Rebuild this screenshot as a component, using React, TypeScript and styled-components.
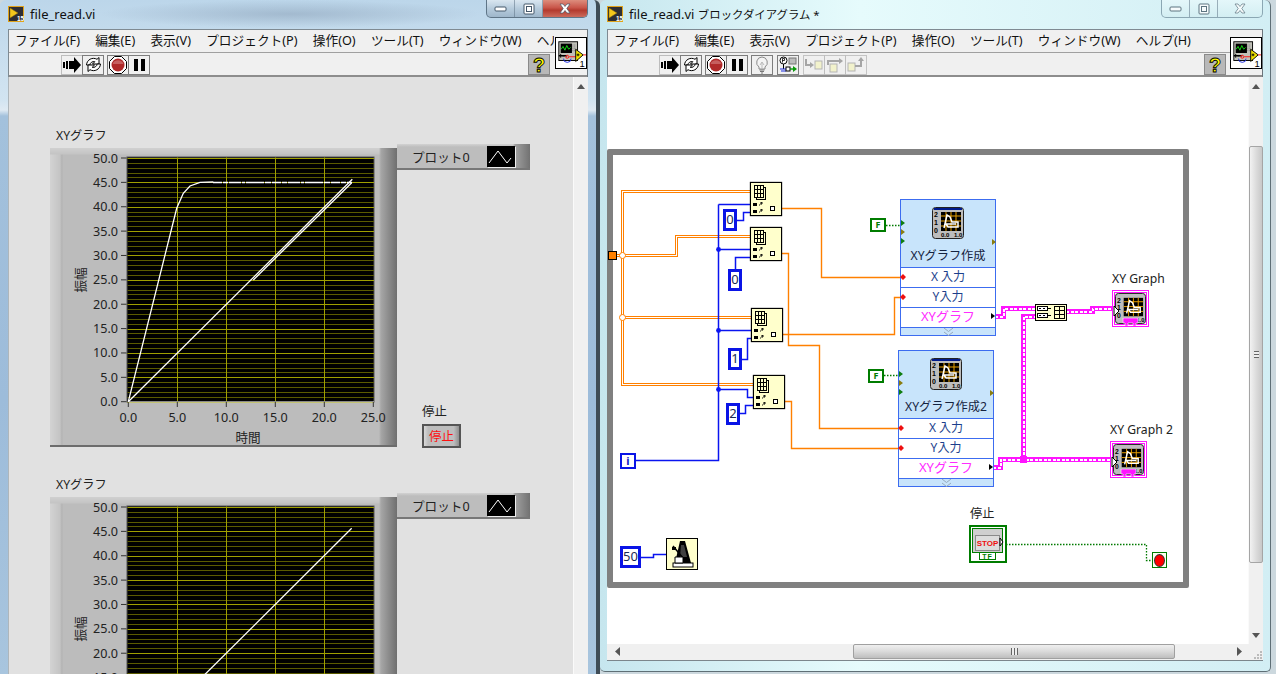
import React from "react";
import styled, { createGlobalStyle, css } from "styled-components";

const UI_FONT = `"Noto Sans", "Noto Sans CJK JP", sans-serif`;
const GLYPH_FONT = "Liberation Sans, sans-serif";

const GlobalStyle = createGlobalStyle`
  html, body {
    margin: 0;
    padding: 0;
    width: 1276px;
    height: 674px;
    overflow: hidden;
    background: #ccd8de;
    font-family: ${UI_FONT};
    font-size: 12px;
    color: #1a1a1a;
  }
`;

const Desktop = styled.div`
  display: flex;
  width: 1276px;
  height: 674px;
  overflow: hidden;
`;

/* window chrome */
const BackWindow = styled.section`
  flex: none;
  display: flex;
  flex-direction: column;
  width: 600px;
  height: 674px;
  padding: 0 8px;
  box-sizing: border-box;
  border-right: 4px solid #3f4c56;
  border-radius: 6px 6px 0 0;
  overflow: hidden;
  background:
    radial-gradient(ellipse 190px 14px at 290px 14px, rgba(110, 130, 155, 0.35), transparent),
    linear-gradient(180deg, #bcd6ea 0, #d2e4f1 100px, #dfeaf3 110px, #a3c1dc 116px, #9dbcda 400px, #a8c5de 674px);
`;

const FrontWindow = styled.section`
  flex: none;
  display: flex;
  flex-direction: column;
  width: 671px;
  height: 672px;
  padding: 0 7px 10px;
  box-sizing: border-box;
  border-right: 1px solid #5f6f76;
  border-bottom: 1px solid #5f6f76;
  border-radius: 6px 6px 5px 5px;
  overflow: hidden;
  background: linear-gradient(90deg, #c6e6ee 0, #e6fbfc 260px, #d2eef4 670px);
`;

const TitleBar = styled.header`
  flex: none;
  display: flex;
  align-items: flex-start;
  height: 29px;
  margin: 0 -1px;
`;

const TitleIcon = styled.svg`
  flex: none;
  margin: 6px 6px 0 1px;
`;

const TitleText = styled.span`
  flex: 1;
  margin-top: 6px;
  font-size: 13px;
  line-height: 16px;
  white-space: nowrap;
  color: #111;
`;

const TitleKana = styled.span`
  font-size: 11.4px;
`;

const WindowControls = styled.div<{ $active?: boolean }>`
  flex: none;
  display: flex;
  width: 102px;
  height: 18px;
  margin-right: 1px;
  border: 1px solid ${(p) => (p.$active ? "#5f7587" : "#8ba7b3")};
  border-top: none;
  border-radius: 0 0 5px 5px;
  box-sizing: border-box;
  overflow: hidden;
  background: ${(p) =>
    p.$active
      ? "linear-gradient(180deg, #d9e6f0, #b6cbdc 50%, #9fb7cb)"
      : "linear-gradient(180deg, #e4f7fa, #d3eef2)"};
`;

const ControlButton = styled.div<{ $grow?: boolean; $danger?: boolean }>`
  display: flex;
  align-items: center;
  justify-content: center;
  flex: ${(p) => (p.$grow ? "1" : "none")};
  width: ${(p) => (p.$grow ? "auto" : "27px")};
  border-right: ${(p) => (p.$grow ? "none" : "1px solid rgba(95, 117, 135, 0.55)")};
  background: ${(p) =>
    p.$danger ? "linear-gradient(180deg, #dd8d7d, #c9564a 45%, #b33a2e 60%, #cc6b5c)" : "none"};
`;

const Chrome = styled.div`
  position: relative;
  flex: none;
  border-top: 1px solid #7f8a92;
  border-left: 1px solid #7f8a92;
  border-right: 1px solid #6b757c;
  background: #f0f0f0;
`;

const MenuBar = styled.nav`
  display: flex;
  gap: 15.2px;
  height: 22px;
  margin-right: 33px;
  padding: 0 0 3px 6px;
  box-sizing: border-box;
  overflow: hidden;
  align-items: center;
  white-space: nowrap;
  font-size: 12.7px;
  color: #111;
`;

const MenuItem = styled.span`
  flex: none;
`;

const ToolBar = styled.div`
  display: flex;
  align-items: center;
  height: 25px;
  padding-top: 1px;
  box-sizing: border-box;
  border-top: 1px solid #a0a0a0;
  border-bottom: 2px solid #8d8d8d;
`;

const ToolGroup = styled.div<{ $gap?: number }>`
  display: flex;
  flex: none;
  margin-left: ${(p) => p.$gap ?? 4}px;
`;

const ToolButton = styled.div<{ $dark?: boolean; $faint?: boolean }>`
  display: flex;
  align-items: center;
  justify-content: center;
  width: 22px;
  height: 20px;
  box-sizing: border-box;
  border: 1px solid ${(p) => (p.$dark ? "#7d7d7d" : "#bdbdbd")};
  margin-left: -1px;
  background: #f0f0f0;
  opacity: ${(p) => (p.$faint ? 0.85 : 1)};
`;

const HelpButton = styled.div<{ $reserve: number }>`
  display: flex;
  align-items: center;
  justify-content: center;
  flex: none;
  width: 22px;
  height: 21px;
  margin-left: auto;
  margin-right: ${(p) => p.$reserve}px;
  box-sizing: border-box;
  border: 1px solid #8a8a8a;
  background: #b8b8b8;
`;

const ConnectorPane = styled.svg`
  position: absolute;
  right: 0;
  top: 7px;
  box-sizing: border-box;
  background: #fff;
  border: 1px solid #000;
`;

const PaneBody = styled.div`
  flex: 1;
  display: flex;
  min-height: 0;
  overflow: hidden;
`;

/* front panel */
const FrontPanel = styled.main`
  flex: 1;
  min-width: 0;
  padding: 49px 0 0 41px;
  box-sizing: border-box;
  overflow: hidden;
  background: #e1e1e1;
  border-left: 1px solid #aeb6bb;
`;

const GraphBlock = styled.article`
  margin-bottom: 27px;
`;

const GraphLabel = styled.div`
  height: 18px;
  padding: 1px 0 0 6px;
  box-sizing: border-box;
  font-size: 12.2px;
  line-height: 18px;
  color: #222;
`;

const GraphRow = styled.div`
  display: flex;
`;

const GraphCase = styled.div`
  position: relative;
  flex: none;
  width: 347px;
  height: 299px;
  margin-top: 4px;
  box-sizing: border-box;
  border-bottom: 2px solid #6c6c6c;
  background:
    linear-gradient(90deg, transparent 329px, #a6a6a6 331px, #6f6f6f 347px),
    linear-gradient(180deg, #d0d0d0 0, #c4c4c4 6px, transparent 7px),
    linear-gradient(90deg, #d3d3d3 0, #c4c4c4 10px, #b2b2b2 12px, #bcbcbc 13px);
  background-color: #bcbcbc;
`;

const GraphSvg = styled.svg`
  display: block;
  font-family: ${UI_FONT};
  font-size: 12.6px;
`;

const SideColumn = styled.div`
  display: flex;
  flex-direction: column;
`;

const Legend = styled.div`
  display: flex;
  align-items: center;
  width: 133px;
  height: 26px;
  box-sizing: border-box;
  padding-left: 15px;
  border-bottom: 2px solid #777;
  background:
    linear-gradient(90deg, transparent 116px, #a0a0a0 118px, #727272 133px),
    linear-gradient(180deg, #d2d2d2 0, #bdbdbd 3px),
    #bdbdbd;
  font-size: 12.6px;
  color: #222;
`;

const LegendName = styled.span`
  width: 75px;
`;

const LegendSwatch = styled.svg`
  flex: none;
  background: #000;
  box-shadow: 1px 1px 0 #eee;
`;

const StopGroup = styled.div`
  margin: 232px 0 0 25px;
`;

const StopLabel = styled.div`
  height: 22px;
  font-size: 12.4px;
  line-height: 20px;
  color: #222;
`;

const StopButton = styled.div`
  display: flex;
  align-items: center;
  justify-content: center;
  width: 39px;
  height: 24px;
  box-sizing: border-box;
  border: 2px solid #555;
  background: linear-gradient(90deg, #d8d8d8, #bdbdbd 12%, #bdbdbd 85%, #8f8f8f);
  color: #ff1010;
  font-size: 12.4px;
`;

/* scroll bars */
const VScroll = styled.aside`
  flex: none;
  position: relative;
  width: 15px;
  background: #f0f0f0;
  border-left: 1px solid #fafafa;
  box-sizing: border-box;
`;

const ScrollArrow = styled.svg<{ $top?: number; $bottom?: number }>`
  position: absolute;
  left: 3px;
  ${(p) => (p.$top !== undefined ? `top: ${p.$top}px;` : "")}
  ${(p) => (p.$bottom !== undefined ? `bottom: ${p.$bottom}px;` : "")}
`;

const VThumb = styled.div`
  position: absolute;
  left: 0;
  right: 0;
  top: 69px;
  height: 417px;
  box-sizing: border-box;
  border: 1px solid #a5a5a5;
  border-radius: 2px;
  background: linear-gradient(90deg, #f2f2f2, #dcdcdc 50%, #c8c8c8);
`;

const VGrip = styled.div`
  position: absolute;
  top: 50%;
  left: 4px;
  width: 5px;
  height: 7px;
  margin-top: -4px;
  background: repeating-linear-gradient(180deg, #666 0 1px, #eee 1px 3px);
`;

const HScrollRow = styled.div`
  flex: none;
  position: relative;
  height: 16px;
  background: #f0f0f0;
  border-bottom: 1px solid #7c868c;
`;

const HThumb = styled.div`
  position: absolute;
  left: 246px;
  top: 0;
  width: 322px;
  height: 15px;
  box-sizing: border-box;
  border: 1px solid #a0a0a0;
  border-radius: 2px;
  background: linear-gradient(180deg, #efefef, #dadada 50%, #bebebe);
`;

const HGrip = styled.div`
  position: absolute;
  left: 50%;
  top: 3px;
  width: 7px;
  height: 7px;
  margin-left: -3px;
  background: repeating-linear-gradient(90deg, #666 0 1px, #eee 1px 3px);
`;

const HArrow = styled.svg<{ $left: number }>`
  position: absolute;
  left: ${(p) => p.$left}px;
  top: 3px;
`;

const SizeGrip = styled.svg`
  position: absolute;
  right: 0;
  bottom: 0;
`;

/* block diagram: page coordinates are kept so nodes read like the wiring */
const OX = 607;
const OY = 77;

const Canvas = styled.div`
  position: relative;
  flex: 1;
  min-width: 0;
  overflow: hidden;
  background: #fff;
`;

const placed = css<{ $x: number; $y: number }>`
  position: absolute;
  left: ${(p) => p.$x - OX}px;
  top: ${(p) => p.$y - OY}px;
`;

const LoopFrame = styled.div`
  position: absolute;
  left: 0;
  top: 72px;
  width: 582px;
  height: 439px;
  box-sizing: border-box;
  border: 6px solid #808080;
  border-radius: 2px;
`;

const WireLayer = styled.svg`
  position: absolute;
  left: 0;
  top: 0;
`;

const Wire = styled.path`
  fill: none;
`;

const ThickOrange = styled(Wire)`
  stroke: #ff8000;
  stroke-width: 3;
  shape-rendering: crispEdges;
`;

const ThickCore = styled(Wire)`
  stroke: #fff;
  stroke-width: 1;
  shape-rendering: crispEdges;
`;

const ThinOrange = styled(Wire)`
  stroke: #ff8000;
  stroke-width: 1.4;
`;

const BlueWire = styled(Wire)`
  stroke: #0a14f0;
  stroke-width: 1.5;
`;

const GreenWire = styled(Wire)`
  stroke: #007a00;
  stroke-width: 1.3;
  stroke-dasharray: 1.5 1.5;
`;

const PinkWire = styled(Wire)`
  stroke: #ff14ff;
  stroke-width: 5;
  shape-rendering: crispEdges;
`;

const PinkCore = styled(Wire)`
  stroke: #fff;
  stroke-width: 2;
  stroke-dasharray: 3 1.5;
  shape-rendering: crispEdges;
`;

const IndexNode = styled.div<{ $x: number; $y: number }>`
  ${placed}
  width: 32px;
  height: 34px;
  box-sizing: border-box;
  border: 1px solid #000;
  box-shadow: 0 0 1px #000;
  background: #ffffcc;
`;

const NodeArt = styled.svg`
  display: block;
`;

const NumConst = styled.div<{ $x: number; $y: number; $w: number }>`
  ${placed}
  width: ${(p) => p.$w}px;
  height: 22px;
  box-sizing: border-box;
  border: 3px solid #0a14e6;
  background: #fff;
  text-align: center;
  font-size: 13px;
  line-height: 15px;
  color: #1a2a55;
`;

const IndexTerminal = styled.div<{ $x: number; $y: number }>`
  ${placed}
  width: 16px;
  height: 16px;
  box-sizing: border-box;
  border: 2.5px solid #0a14e6;
  background: #fff;
  text-align: center;
  font-size: 11px;
  font-weight: 700;
  line-height: 11px;
  color: #0a14c8;
`;

const BoolConst = styled.div<{ $x: number; $y: number }>`
  ${placed}
  width: 16px;
  height: 14px;
  box-sizing: border-box;
  border: 2.5px solid #007c00;
  background: #fff;
  text-align: center;
  font-size: 9px;
  font-weight: 700;
  line-height: 9px;
  color: #007c00;
`;

const Tunnel = styled.div`
  position: absolute;
  left: 1px;
  top: 174px;
  width: 9px;
  height: 9px;
  box-sizing: border-box;
  border: 1px solid #000;
  background: #ff8000;
`;

const ExpressNode = styled.div<{ $x: number; $y: number }>`
  ${placed}
  width: 96px;
  height: 137px;
  display: flex;
  flex-direction: column;
  box-sizing: border-box;
  border: 1px solid #3c6cf0;
  background: #c8e4fb;
`;

const ExpressHeader = styled.div`
  flex: none;
  display: flex;
  flex-direction: column;
  align-items: center;
  height: 67px;
  padding-top: 7px;
  box-sizing: border-box;
`;

const ExpressTitle = styled.div`
  margin-top: 8px;
  font-size: 12.2px;
  line-height: 17px;
  white-space: nowrap;
  color: #15233f;
`;

const ExpressRow = styled.div<{ $pink?: boolean }>`
  flex: none;
  height: 20px;
  box-sizing: border-box;
  border-top: 1px solid #3c6cf0;
  background: #fff;
  text-align: center;
  font-size: ${(p) => (p.$pink ? 13 : 12)}px;
  line-height: 17px;
  color: ${(p) => (p.$pink ? "#ff2cff" : "#1c3f8c")};
`;

const ExpressFooter = styled.div`
  flex: 1;
  display: flex;
  justify-content: center;
  align-items: center;
  border-top: 1px solid #3c6cf0;
`;

const ExpressTerms = styled.svg`
  position: absolute;
  left: -1px;
  top: -1px;
  pointer-events: none;
`;

const BundleNode = styled.div<{ $x: number; $y: number }>`
  ${placed}
  width: 32px;
  height: 17px;
  box-sizing: border-box;
  border: 1px solid #000;
  background: #ffffcc;
`;

const GraphTerminal = styled.div<{ $x: number; $y: number }>`
  ${placed}
  width: 37px;
  height: 37px;
  box-sizing: border-box;
  border: 1px solid #ff14ff;
  padding: 1px;
  background: #fff;
`;

const GraphFrame = styled.div`
  position: relative;
  width: 33px;
  height: 33px;
  box-sizing: border-box;
  border: 1px solid #ff14ff;
`;

const GraphPin = styled.svg`
  position: absolute;
  left: -2px;
  top: 12px;
`;

const GraphTag = styled.svg`
  position: absolute;
  left: 7px;
  bottom: -2px;
`;

const DiagramLabel = styled.div<{ $x: number; $y: number }>`
  ${placed}
  font-size: 12.2px;
  line-height: 16px;
  white-space: nowrap;
  color: #222;
`;

const WaitNode = styled.div<{ $x: number; $y: number }>`
  ${placed}
  width: 32px;
  height: 32px;
  box-sizing: border-box;
  border: 1px solid #000;
  background: #ffffcc;
`;

const StopTerminal = styled.div<{ $x: number; $y: number }>`
  ${placed}
  width: 38px;
  height: 38px;
  box-sizing: border-box;
  border: 2.5px solid #007c00;
  background: #fff;
`;

const StopCondition = styled.div<{ $x: number; $y: number }>`
  ${placed}
  display: flex;
  align-items: center;
  justify-content: center;
  width: 15px;
  height: 16px;
  box-sizing: border-box;
  border: 1px solid #007c00;
  background: #fffff0;
`;

const StopDot = styled.div`
  width: 9px;
  height: 11px;
  border-radius: 50%;
  background: #f00;
  box-shadow: 0 0 0 1px #333;
`;

/* chart */
const PX0 = 78.3;
const PY0 = 253.7;
const SX = 9.8;
const SY = 4.874;
const xOf = (v: number) => PX0 + v * SX;
const yOf = (v: number) => PY0 - v * SY;

const RISE_TRACE = "M78.3 253.7 L126.700 60.300 L133.300 45.300 L140 38 L150 34.300 L163.300 34";
const RAMP_OUT = "M78.3 253.7 L302.300 31.300";
const RAMP_BACK = "M203.300 132 L301.700 34.700";
const PLATEAU_TRACE = "M163 34.500 L302 34.500";
const RAMP_ONLY = "M78.3 253.700 L301.700 31.300";

function XYChart({ traces, noisy }: { traces: string[]; noisy?: boolean }) {
  const minorY = Array.from({ length: 50 }, (_, i) => i + 1).filter((i) => i % 5 !== 0);
  const majorY = Array.from({ length: 11 }, (_, i) => i * 5);
  const majorX = Array.from({ length: 6 }, (_, i) => i * 5);
  return (
    <GraphSvg width={347} height={297} viewBox="0 0 347 297">
      <rect x={77} y={9} width={247} height={245} fill="#000" stroke="#555" />
      {minorY.map((v) => (
        <line key={v} x1={77.5} x2={324} y1={Math.round(yOf(v)) + 0.5} y2={Math.round(yOf(v)) + 0.5} stroke="#5a5a00" />
      ))}
      {majorY.map((v) => (
        <line key={v} x1={77.5} x2={324} y1={Math.round(yOf(v)) + 0.5} y2={Math.round(yOf(v)) + 0.5} stroke="#a0a000" />
      ))}
      {majorX.slice(1, 5).map((v) => (
        <line key={v} y1={9.5} y2={253} x1={Math.round(xOf(v)) + 0.5} x2={Math.round(xOf(v)) + 0.5} stroke="#a0a000" />
      ))}
      <line x1={78} x2={324} y1={254} y2={254} stroke="#e8e8e8" />
      {majorY.map((v) => (
        <g key={v}>
          <text x={68} y={yOf(v) + 4.5} textAnchor="end" fill="#222">
            {v.toFixed(1)}
          </text>
          <line x1={71} x2={76.5} y1={yOf(v)} y2={yOf(v)} stroke="#333" />
        </g>
      ))}
      {majorX.map((v) => (
        <g key={v}>
          <text x={xOf(v)} y={274} textAnchor="middle" fill="#222">
            {v.toFixed(1)}
          </text>
          <line x1={xOf(v)} x2={xOf(v)} y1={254} y2={259} stroke="#333" />
        </g>
      ))}
      <text x={198} y={294} textAnchor="middle" fill="#222">
        時間
      </text>
      <text transform="rotate(-90 31 132)" x={31} y={136} textAnchor="middle" fill="#222">
        振幅
      </text>
      {traces.map((d) => (
        <path key={d} d={d} fill="none" stroke="#fff" strokeWidth={1.3} />
      ))}
      {noisy && (
        <path
          d={PLATEAU_TRACE}
          fill="none"
          stroke="#fff"
          strokeWidth={1.7}
          strokeDasharray="9 1 5 1 12 1 3 1 18 1 6 1"
        />
      )}
    </GraphSvg>
  );
}

/* toolbar icons */
function RunIcon() {
  return (
    <svg width={18} height={16} viewBox="0 0 18 16">
      <path d="M0 5h2v6H0zM3 4h2v8H3z" fill="#000" />
      <path d="M6 4h5V0l7 8-7 8v-4H6z" fill="#000" />
    </svg>
  );
}

function CycleIcon() {
  const half = "M1.500 9A7 7 0 0 1 12 3.300L14 1.500V8H7.500L9.800 5.700A4 4 0 0 0 4.800 9Z";
  return (
    <svg width={17} height={17} viewBox="0 0 17 17">
      <path d={half} fill="#fff" stroke="#000" />
      <path d={half} fill="#fff" stroke="#000" transform="rotate(180 8.500 8.500)" />
    </svg>
  );
}

function AbortIcon() {
  return (
    <svg width={18} height={18} viewBox="0 0 18 18">
      <path d="M5.500 .5h7l5 5v7l-5 5h-7l-5-5v-7z" fill="#fff" stroke="#000" />
      <circle cx={9} cy={9} r={6.500} fill="#b02a2a" />
      <path d="M3.600 8a5.600 5 0 0 1 10.800 0z" fill="#d98a8a" opacity={0.55} />
    </svg>
  );
}

function PauseIcon() {
  return (
    <svg width={13} height={14} viewBox="0 0 13 14">
      <path d="M1 1h4v12H1zM8 1h4v12H8z" fill="#000" />
    </svg>
  );
}

function BulbIcon() {
  return (
    <svg width={14} height={18} viewBox="0 0 14 18">
      <path d="M7 1a5.500 5.500 0 0 0-3 10v2h6v-2A5.500 5.500 0 0 0 7 1z" fill="#f4f4f4" stroke="#8b8b8b" />
      <path d="M5 9l2-3 2 3M7 6v7" fill="none" stroke="#bbb" />
      <path d="M4.500 14h5M5 15.500h4M6 17h2" stroke="#777" />
    </svg>
  );
}

function RetainIcon() {
  return (
    <svg width={19} height={18} viewBox="0 0 19 18">
      <circle cx={4.500} cy={4.500} r={3.500} fill="#fff" stroke="#000" />
      <path d="M3.500 6.500V2.500h2v2h-2" fill="none" stroke="#000" strokeWidth={0.8} />
      <rect x={10} y={2} width={7} height={6} fill="#bdbdbd" stroke="#777" />
      <path d="M4.500 8v5" stroke="#000" />
      <path d="M1 13h6M2 15h5" stroke="#1c2ce0" />
      <rect x={7} y={11} width={4} height={4} fill="#fff" stroke="#000" />
      <path d="M11 13h4" stroke="#0a9a0a" strokeWidth={1.400} />
      <path d="M14 10l4 3-4 3z" fill="#0a9a0a" />
    </svg>
  );
}

function StepInIcon() {
  return (
    <svg width={18} height={14} viewBox="0 0 18 14">
      <path d="M1 1v6h5" fill="none" stroke="#999" strokeWidth={2} />
      <path d="M5 4l4 3-4 3z" fill="#999" />
      <rect x={10} y={3} width={7} height={8} fill="#f3f3c6" stroke="#aaa" />
    </svg>
  );
}

function StepOverIcon() {
  return (
    <svg width={18} height={16} viewBox="0 0 18 16">
      <path d="M2 8V4h12" fill="none" stroke="#999" strokeWidth={2} />
      <path d="M13 1l4 3-4 3z" fill="#999" />
      <rect x={4} y={7} width={7} height={8} fill="#f3f3c6" stroke="#aaa" />
    </svg>
  );
}

function StepOutIcon() {
  return (
    <svg width={18} height={16} viewBox="0 0 18 16">
      <rect x={1} y={6} width={7} height={8} fill="#f3f3c6" stroke="#aaa" />
      <path d="M8 9h6V3" fill="none" stroke="#999" strokeWidth={2} />
      <path d="M11 4l3-4 3 4z" fill="#999" />
    </svg>
  );
}

function HelpIcon() {
  return (
    <svg width={18} height={19} viewBox="0 0 18 19">
      <text
        x={9}
        y={16.500}
        textAnchor="middle"
        fontFamily={GLYPH_FONT}
        fontWeight={700}
        fontSize={20}
        fill="#ffff00"
        stroke="#000"
        strokeWidth={0.9}
      >
        ?
      </text>
    </svg>
  );
}

function ViIcon() {
  return (
    <ConnectorPane width={32} height={32} viewBox="0 0 32 32">
      <rect x={3} y={4} width={20} height={20} fill="#c0c0b8" stroke="#000" />
      <rect x={5} y={6} width={12} height={10} fill="#000" />
      <path d="M5.500 12l2-3 2 4 2-5 2 4 2-2" fill="none" stroke="#18e018" />
      <path d="M18 7v7M20 7v7" stroke="#777" strokeDasharray="1 1" />
      <path d="M3 19h9" stroke="#000" strokeWidth={1.500} />
      <path d="M5 17v4M7 19h2" stroke="#000" />
      <path d="M14 20h12" stroke="#ff1010" />
      <path d="M8 22a4 4 0 0 0 8 0" fill="none" stroke="#1c2ce0" />
      <circle cx={12} cy={20} r={1.600} fill="none" stroke="#ff1010" />
      <path d="M21 12l8 6-8 7z" fill="#f2e400" stroke="#000" />
      <path d="M22 18h3M23.500 16.500v3" stroke="#000" />
      <path d="M29 18h3" stroke="#ff1010" />
      <text x={25} y={31} fontSize={10} fontFamily={GLYPH_FONT} fill="#000">
        1
      </text>
    </ConnectorPane>
  );
}

function LvLogo() {
  return (
    <TitleIcon width={16} height={16} viewBox="0 0 16 16">
      <rect x={0.500} y={0.500} width={15} height={15} fill="#2f2f33" stroke="#e0a21a" />
      <path d="M2 2l8 5-8 5z" fill="#f4c81c" stroke="#8a6a10" strokeWidth={0.500} />
      <text x={9} y={14.500} fontSize={6.500} fontWeight={700} fontFamily={GLYPH_FONT} fill="#fff">
        15
      </text>
    </TitleIcon>
  );
}

function Controls({ active }: { active?: boolean }) {
  const fg = active ? "#fff" : "#f6fbfc";
  const edge = active ? "#45586a" : "#5d7480";
  return (
    <WindowControls $active={active}>
      <ControlButton>
        <svg width={14} height={8} viewBox="0 0 14 8">
          <rect x={1} y={2} width={11} height={4} rx={1} fill={fg} stroke={edge} />
        </svg>
      </ControlButton>
      <ControlButton>
        <svg width={12} height={12} viewBox="0 0 12 12">
          <rect x={1} y={1} width={10} height={10} rx={1} fill={fg} stroke={edge} />
          <rect x={3.500} y={3.500} width={5} height={5} fill="none" stroke={edge} />
        </svg>
      </ControlButton>
      <ControlButton $grow $danger={active}>
        <svg width={12} height={11} viewBox="0 0 12 11">
          <path d="M1 1h3l2 2.500L8 1h3L7.800 5.500 11 10H8L6 7.500 4 10H1l3.200-4.500z" fill={fg} stroke={edge} strokeWidth={0.700} />
        </svg>
      </ControlButton>
    </WindowControls>
  );
}

const MENUS = ["ファイル(F)", "編集(E)", "表示(V)", "プロジェクト(P)", "操作(O)", "ツール(T)", "ウィンドウ(W)", "ヘルプ(H)"];

function Menu() {
  return (
    <MenuBar>
      {MENUS.map((m) => (
        <MenuItem key={m}>{m}</MenuItem>
      ))}
    </MenuBar>
  );
}

function PlotLegend() {
  return (
    <Legend>
      <LegendName>プロット0</LegendName>
      <LegendSwatch width={28} height={21} viewBox="0 0 28 21">
        <path d="M2 17L11 5l9 12 4-5" fill="none" stroke="#fff" />
      </LegendSwatch>
    </Legend>
  );
}

/* block diagram art */
function IndexArt() {
  return (
    <NodeArt width={30} height={32} viewBox="0 0 30 32">
      <rect x={5.500} y={4.500} width={9} height={12} fill="#ffffcc" stroke="#000" />
      <rect x={3.500} y={2.500} width={9} height={12} fill="#ffffcc" stroke="#000" />
      <path d="M3 6.500h10M3 10.500h10M6.500 2v12M9.500 2v12" stroke="#000" />
      <rect x={2} y={20} width={4} height={3} fill="#000" />
      <rect x={2} y={27} width={4} height={3} fill="#000" />
      <path d="M8 22h1M10 22l0.500-3M9 20h3M8 29h1M10 29l0.500-3M9 27h3" stroke="#000" strokeWidth={0.900} />
      <rect x={19.500} y={23.500} width={4} height={4} fill="#fff" stroke="#000" />
    </NodeArt>
  );
}

function GraphGlyph({ size, banner }: { size: number; banner?: boolean }) {
  const tick = { fontWeight: 700, fontFamily: GLYPH_FONT, fill: "#000" };
  return (
    <NodeArt width={size} height={size} viewBox="0 0 32 32">
      <rect x={0.500} y={0.500} width={31} height={31} rx={3} fill="#bdbdbd" stroke="#222" />
      {banner && <path d="M2 1h28v2H2z" fill="#001a8c" />}
      <rect x={9} y={5} width={20} height={19} fill="#000" />
      <path d="M9 9h20M9 14h20M9 19h20M14 5v19M19 5v19M24 5v19" stroke="#e8a000" />
      <path d="M12 21l3-13 3 2 2 5h6v5H16l-2-3h10" fill="none" stroke="#fff" strokeWidth={1.500} />
      <text x={2} y={10} fontSize={7} {...tick}>
        2
      </text>
      <text x={2} y={18} fontSize={7} {...tick}>
        1
      </text>
      <text x={2} y={26} fontSize={7} {...tick}>
        0
      </text>
      <text x={9} y={30} fontSize={6} {...tick}>
        0.0
      </text>
      <text x={22} y={30} fontSize={6} {...tick}>
        1.0
      </text>
    </NodeArt>
  );
}

function Express({ x, y, title }: { x: number; y: number; title: string }) {
  return (
    <ExpressNode $x={x} $y={y}>
      <ExpressHeader>
        <GraphGlyph size={32} banner />
        <ExpressTitle>{title}</ExpressTitle>
      </ExpressHeader>
      <ExpressRow>X 入力</ExpressRow>
      <ExpressRow>Y入力</ExpressRow>
      <ExpressRow $pink>XYグラフ</ExpressRow>
      <ExpressFooter>
        <svg width={11} height={8} viewBox="0 0 11 8">
          <path d="M1 0l4.500 3.500L10 0M1 4l4.500 3.500L10 4" fill="none" stroke="#97aabb" />
        </svg>
      </ExpressFooter>
      <ExpressTerms width={98} height={139} viewBox="0 0 98 139">
        <path d="M1 21l4 3-4 3zM1 39l4 3-4 3z" fill="#0f7d0f" />
        <path d="M1 30l4 3-4 3zM92 40l4 3-4 3z" fill="#8a7d10" />
        <path d="M0 78l3-3 3 3-3 3zM0 98l3-3 3 3-3 3z" fill="#ee1010" />
        <path d="M91 114l4 3-4 3z" fill="#000" />
      </ExpressTerms>
    </ExpressNode>
  );
}

function GraphTerm({ x, y }: { x: number; y: number }) {
  return (
    <GraphTerminal $x={x} $y={y}>
      <GraphFrame>
        <GraphGlyph size={31} />
        <GraphPin width={7} height={12} viewBox="0 0 7 12">
          <path d="M1 1l5 5-5 5z" fill="#fff" stroke="#000" />
        </GraphPin>
        <GraphTag width={17} height={8} viewBox="0 0 17 8">
          <path d="M1 0h15v5h-2v3h-3V5H6v3H3V5H1z" fill="#ff14ff" stroke="#fff" strokeWidth={0.600} />
        </GraphTag>
      </GraphFrame>
    </GraphTerminal>
  );
}

function Wires() {
  const thick = [
    "M612.500 255.500H622.500",
    "M622.500 255.500V191.500H751",
    "M622.500 255.500H676.500V236.500H751",
    "M622.500 255.500V384.500H754",
    "M622.500 317.500H752",
  ];
  const thin = [
    "M782 208.500H821.500V277.500H901",
    "M782 253.500H788.500V345.500H819.500V428.500H899",
    "M783 334.500H894.500V297.500H901",
    "M785 401.500H791.500V448.500H899",
  ];
  const blue = [
    "M718.500 204.500V460.500H636",
    "M718.500 204.500H751",
    "M718.500 249.500H751",
    "M718.500 330.500H752",
    "M718.500 389.500H747.500V397.500H754",
    "M737 220.500H743.500V212.500H751",
    "M735.500 269V257.500H751",
    "M742 359.500H747.500V338.500H752",
    "M739 413.500H745.500V405.500H754",
    "M640 557.500H653.500V554.500H666",
  ];
  const green = ["M886 225.500H900", "M884 375.500H898", "M1006 544.500H1146.500V560.500H1152"];
  const pink = [
    "M995 316.500H1003.500V308.500H1036",
    "M993 467.500H1000.500V459.500H1110",
    "M1023.500 459.500V316.500H1036",
    "M1066 311.500H1092.500V308.500H1112",
  ];
  return (
    <WireLayer width={641} height={569} viewBox={`${OX} ${OY} 641 569`}>
      {thick.map((d) => (
        <ThickOrange key={d} d={d} />
      ))}
      {thick.map((d) => (
        <ThickCore key={d} d={d} />
      ))}
      {thin.map((d) => (
        <ThinOrange key={d} d={d} />
      ))}
      {blue.map((d) => (
        <BlueWire key={d} d={d} />
      ))}
      {[249.500, 330.500, 389.500].map((cy) => (
        <circle key={cy} cx={718.500} cy={cy} r={2.400} fill="#0a14f0" />
      ))}
      <circle cx={622.500} cy={255.500} r={3} fill="#fff" stroke="#ff8000" />
      <circle cx={622.500} cy={317.500} r={3} fill="#fff" stroke="#ff8000" />
      {green.map((d) => (
        <GreenWire key={d} d={d} />
      ))}
      {pink.map((d) => (
        <PinkWire key={d} d={d} />
      ))}
      {pink.map((d) => (
        <PinkCore key={d} d={d} />
      ))}
      <rect x={1020} y={456} width={7} height={7} fill="#ff14ff" />
    </WireLayer>
  );
}

function Diagram() {
  return (
    <Canvas>
      <LoopFrame />
      <Wires />
      <Tunnel />
      <IndexNode $x={750} $y={182}>
        <IndexArt />
      </IndexNode>
      <IndexNode $x={750} $y={227}>
        <IndexArt />
      </IndexNode>
      <IndexNode $x={751} $y={308}>
        <IndexArt />
      </IndexNode>
      <IndexNode $x={753} $y={375}>
        <IndexArt />
      </IndexNode>
      <NumConst $x={723} $y={209} $w={14}>
        0
      </NumConst>
      <NumConst $x={728} $y={269} $w={14}>
        0
      </NumConst>
      <NumConst $x={728} $y={348} $w={14}>
        1
      </NumConst>
      <NumConst $x={726} $y={403} $w={14}>
        2
      </NumConst>
      <NumConst $x={620} $y={546} $w={21}>
        50
      </NumConst>
      <IndexTerminal $x={620} $y={453}>
        i
      </IndexTerminal>
      <BoolConst $x={870} $y={218}>
        F
      </BoolConst>
      <BoolConst $x={868} $y={369}>
        F
      </BoolConst>
      <Express x={900} y={199} title="XYグラフ作成" />
      <Express x={898} y={350} title="XYグラフ作成2" />
      <BundleNode $x={1035} $y={304}>
        <NodeArt width={30} height={15} viewBox="0 0 30 15">
          <rect x={1.500} y={1.500} width={10} height={4} fill="#fff" stroke="#000" />
          <rect x={1.500} y={8.500} width={10} height={4} fill="#fff" stroke="#000" />
          <path d="M3 3.500h2M7 3.500h2M3 10.500h2M7 10.500h2M12 3.500h3M12 10.500h3" stroke="#000" />
          <rect x={18.500} y={1.500} width={10} height={12} fill="#ffffcc" stroke="#000" />
          <path d="M18 5.500h10M18 9.500h10M23.500 1v12" stroke="#000" />
        </NodeArt>
      </BundleNode>
      <DiagramLabel $x={1112} $y={271}>
        XY Graph
      </DiagramLabel>
      <DiagramLabel $x={1110} $y={422}>
        XY Graph 2
      </DiagramLabel>
      <GraphTerm x={1112} y={290} />
      <GraphTerm x={1110} y={441} />
      <WaitNode $x={666} $y={538}>
        <NodeArt width={30} height={30} viewBox="0 0 30 30">
          <path d="M13 2h5l6 22H8z" fill="#000" />
          <path d="M14 6h3l3 12h-7z" fill="#fff" opacity={0.250} />
          <path d="M6 7l10 12" stroke="#000" strokeWidth={1.500} />
          <rect x={5} y={8} width={4} height={3} fill="#000" />
          <rect x={6} y={24} width={20} height={4} fill="#fff" stroke="#000" />
          <path d="M8 18h8v6H8z" fill="#fff" stroke="#000" />
        </NodeArt>
      </WaitNode>
      <DiagramLabel $x={970} $y={506}>
        停止
      </DiagramLabel>
      <StopTerminal $x={969} $y={525}>
        <NodeArt width={33} height={33} viewBox="0 0 33 33">
          <rect x={1.500} y={1.500} width={30} height={24} fill="#cfcfcf" stroke="#007c00" />
          <rect x={4.500} y={8.500} width={24} height={15} fill="#dcdcdc" stroke="#8a8a8a" />
          <text x={16.500} y={19} textAnchor="middle" fontSize={8} fontWeight={700} fontFamily={GLYPH_FONT} fill="#ee1010">
            STOP
          </text>
          <path d="M29 11l3 4-3 4z" fill="#fff" stroke="#000" />
          <rect x={8.500} y={25.500} width={16} height={7} fill="#fff" stroke="#007c00" />
          <text x={16.500} y={31.500} textAnchor="middle" fontSize={7} fontWeight={700} fontFamily={GLYPH_FONT} letterSpacing={1} fill="#007c00">
            TF
          </text>
        </NodeArt>
      </StopTerminal>
      <StopCondition $x={1152} $y={552}>
        <StopDot />
      </StopCondition>
    </Canvas>
  );
}

function ArrowUp({ top }: { top: number }) {
  return (
    <ScrollArrow $top={top} width={8} height={5} viewBox="0 0 8 5">
      <path d="M4 0l4 5H0z" fill="#555" />
    </ScrollArrow>
  );
}

export default function App() {
  return (
    <Desktop>
      <GlobalStyle />
      <BackWindow>
        <TitleBar>
          <LvLogo />
          <TitleText>file_read.vi</TitleText>
          <Controls active />
        </TitleBar>
        <Chrome>
          <Menu />
          <ToolBar>
            <ToolGroup $gap={53}>
              <ToolButton>
                <RunIcon />
              </ToolButton>
              <ToolButton $dark>
                <CycleIcon />
              </ToolButton>
            </ToolGroup>
            <ToolGroup>
              <ToolButton $dark>
                <AbortIcon />
              </ToolButton>
              <ToolButton $dark>
                <PauseIcon />
              </ToolButton>
            </ToolGroup>
            <HelpButton $reserve={37}>
              <HelpIcon />
            </HelpButton>
          </ToolBar>
          <ViIcon />
        </Chrome>
        <PaneBody>
          <FrontPanel>
            <GraphBlock>
              <GraphLabel>XYグラフ</GraphLabel>
              <GraphRow>
                <GraphCase>
                  <XYChart traces={[RISE_TRACE, RAMP_OUT, RAMP_BACK]} noisy />
                </GraphCase>
                <SideColumn>
                  <PlotLegend />
                  <StopGroup>
                    <StopLabel>停止</StopLabel>
                    <StopButton>停止</StopButton>
                  </StopGroup>
                </SideColumn>
              </GraphRow>
            </GraphBlock>
            <GraphBlock>
              <GraphLabel>XYグラフ</GraphLabel>
              <GraphRow>
                <GraphCase>
                  <XYChart traces={[RAMP_ONLY]} />
                </GraphCase>
                <SideColumn>
                  <PlotLegend />
                </SideColumn>
              </GraphRow>
            </GraphBlock>
          </FrontPanel>
          <VScroll>
            <ArrowUp top={7} />
          </VScroll>
        </PaneBody>
      </BackWindow>
      <FrontWindow>
        <TitleBar>
          <LvLogo />
          <TitleText>
            file_read.vi <TitleKana>ブロックダイアグラム *</TitleKana>
          </TitleText>
          <Controls />
        </TitleBar>
        <Chrome>
          <Menu />
          <ToolBar>
            <ToolGroup $gap={52}>
              <ToolButton>
                <RunIcon />
              </ToolButton>
              <ToolButton $dark>
                <CycleIcon />
              </ToolButton>
            </ToolGroup>
            <ToolGroup>
              <ToolButton $dark>
                <AbortIcon />
              </ToolButton>
              <ToolButton $dark>
                <PauseIcon />
              </ToolButton>
            </ToolGroup>
            <ToolGroup>
              <ToolButton $dark>
                <BulbIcon />
              </ToolButton>
            </ToolGroup>
            <ToolGroup $gap={5}>
              <ToolButton $dark>
                <RetainIcon />
              </ToolButton>
            </ToolGroup>
            <ToolGroup $gap={5}>
              <ToolButton $faint>
                <StepInIcon />
              </ToolButton>
              <ToolButton $faint>
                <StepOverIcon />
              </ToolButton>
              <ToolButton $faint>
                <StepOutIcon />
              </ToolButton>
            </ToolGroup>
            <HelpButton $reserve={36}>
              <HelpIcon />
            </HelpButton>
          </ToolBar>
          <ViIcon />
        </Chrome>
        <PaneBody>
          <Diagram />
          <VScroll>
            <ArrowUp top={7} />
            <VThumb>
              <VGrip />
            </VThumb>
            <ScrollArrow $bottom={6} width={8} height={5} viewBox="0 0 8 5">
              <path d="M4 5L8 0H0z" fill="#555" />
            </ScrollArrow>
          </VScroll>
        </PaneBody>
        <HScrollRow>
          <HArrow $left={8} width={5} height={9} viewBox="0 0 5 9">
            <path d="M0 4.500L5 0v9z" fill="#555" />
          </HArrow>
          <HThumb>
            <HGrip />
          </HThumb>
          <HArrow $left={630} width={5} height={9} viewBox="0 0 5 9">
            <path d="M5 4.500L0 0v9z" fill="#555" />
          </HArrow>
          <SizeGrip width={12} height={12} viewBox="0 0 12 12">
            <path d="M9 3h2v2H9zM6 6h2v2H6zM9 6h2v2H9zM3 9h2v2H3zM6 9h2v2H6zM9 9h2v2H9z" fill="#bbb" />
          </SizeGrip>
        </HScrollRow>
      </FrontWindow>
    </Desktop>
  );
}
